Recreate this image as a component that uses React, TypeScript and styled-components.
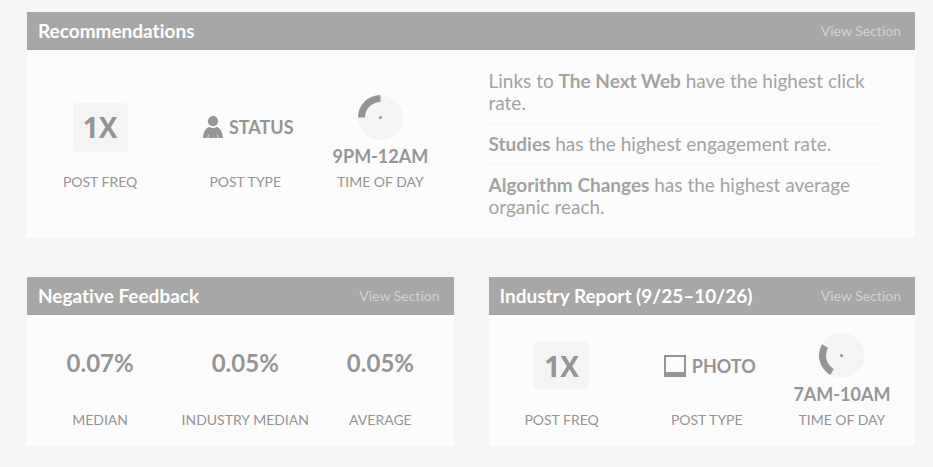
import React from "react";
import styled, { createGlobalStyle } from "styled-components";

const GlobalStyle = createGlobalStyle`
  * { box-sizing: border-box; }
  body {
    margin: 0;
    background: #f5f5f5;
    color: #959595;
    font-family: "Lato", "Liberation Sans", sans-serif;
    font-variant-ligatures: none;
  }
`;

const Page = styled.main`
  display: grid;
  grid-template-columns: 1fr 1fr;
  gap: 39px 35px;
  padding: 12px 18px 20px 27px;
`;

const Card = styled.section<{ $wide?: boolean }>`
  grid-column: ${(p) => (p.$wide ? "1 / -1" : "auto")};
  background: #fcfcfc;
`;

const CardHeader = styled.header`
  display: flex;
  align-items: center;
  justify-content: space-between;
  height: 38px;
  padding: 0 14px 0 11px;
  background: #a7a7a7;
  border-bottom: 1px solid #a2a2a2;
`;

const CardTitle = styled.h2`
  margin: 0;
  color: #fff;
  font-size: 19px;
  line-height: 24px;
  font-weight: 700;
`;

const SectionLink = styled.a`
  color: #d2d2d2;
  font-size: 14px;
  line-height: 20px;
  text-decoration: none;
`;

const SplitBody = styled.div`
  display: grid;
  grid-template-columns: 1fr 1fr;
  column-gap: 35px;
  align-items: center;
  padding-bottom: 4px;
`;

const Metrics = styled.div`
  display: grid;
  grid-template-columns: 146fr 144fr 126fr;
  padding: 12px 10px 16px 0;
`;

const Metric = styled.div`
  display: flex;
  flex-direction: column;
  align-items: center;
  gap: 5px;
`;

const MetricValue = styled.div`
  display: flex;
  align-items: center;
  justify-content: center;
  height: 77px;
`;

const MetricLabel = styled.div`
  font-size: 14px;
  line-height: 21px;
  white-space: nowrap;
`;

const Frequency = styled.div`
  display: flex;
  align-items: center;
  justify-content: center;
  width: 55px;
  height: 49px;
  border-radius: 4px;
  background: #f4f4f4;
  font-family: "Open Sans", sans-serif;
  font-size: 28px;
  font-weight: 700;
`;

const Percent = styled.div`
  padding-bottom: 6px;
  font-size: 24px;
  line-height: 28px;
  font-weight: 700;
`;

const PostType = styled.div`
  display: flex;
  align-items: center;
  gap: 6px;
  padding-left: 6px;
  font-size: 18px;
  line-height: 20px;
  font-weight: 700;
`;

const TimeOfDay = styled.div`
  display: flex;
  flex-direction: column;
  align-items: center;
  gap: 6px;
  padding-top: 6px;
  font-size: 18px;
  line-height: 20px;
  font-weight: 700;
  white-space: nowrap;
`;

const Insights = styled.ul`
  margin: 0;
  padding: 11px 35px 7px 0;
  list-style: none;
`;

const Insight = styled.li`
  padding: 9px 0;
  color: #a3a3a3;
  font-size: 19px;
  line-height: 22px;

  & + & {
    border-top: 1px solid #f3f3f3;
  }
`;

function PersonIcon() {
  return (
    <svg width="20" height="22" viewBox="0 0 20 22" fill="#959595" aria-hidden="true">
      <circle cx="10" cy="5.2" r="5.1" />
      <path d="M0 22C.3 15.4 3.4 11.6 6.2 11Q10 13 13.8 11C16.6 11.6 19.7 15.4 20 22Z" />
      <path d="M5.6 18.6L4.7 22M14.4 18.6L15.3 22" stroke="#fcfcfc" strokeWidth=".7" />
    </svg>
  );
}

function PhotoIcon() {
  return (
    <svg width="22" height="22" viewBox="0 0 22 22" aria-hidden="true">
      <path fill="#959595" fillRule="evenodd" d="M0 0H22V22H0ZM2 2V17H20V2Z" />
    </svg>
  );
}

function Clock({ from, to }: { from: number; to: number }) {
  const point = (hour: number) => {
    const a = (hour / 12) * Math.PI * 2;
    return `${22.5 + 19 * Math.sin(a)} ${22.5 - 19 * Math.cos(a)}`;
  };
  return (
    <svg width="45" height="45" viewBox="0 0 45 45" aria-hidden="true">
      <circle cx="22.5" cy="22.5" r="22.5" fill="#f4f4f4" />
      <path d={`M${point(from)}A19 19 0 0 1 ${point(to)}`} fill="none" stroke="#959595" strokeWidth="7" />
      <circle cx="22.5" cy="22.5" r="1.5" fill="#959595" />
    </svg>
  );
}

function Stat({ label, children }: { label: string; children: React.ReactNode }) {
  return (
    <Metric>
      <MetricValue>{children}</MetricValue>
      <MetricLabel>{label}</MetricLabel>
    </Metric>
  );
}

function Header({ title }: { title: string }) {
  return (
    <CardHeader>
      <CardTitle>{title}</CardTitle>
      <SectionLink href="#">View Section</SectionLink>
    </CardHeader>
  );
}

type PostingProps = {
  icon: React.ReactNode;
  type: string;
  from: number;
  to: number;
  time: string;
};

function PostingMetrics({ icon, type, from, to, time }: PostingProps) {
  return (
    <Metrics>
      <Stat label="POST FREQ">
        <Frequency>1X</Frequency>
      </Stat>
      <Stat label="POST TYPE">
        <PostType>
          {icon}
          {type}
        </PostType>
      </Stat>
      <Stat label="TIME OF DAY">
        <TimeOfDay>
          <Clock from={from} to={to} />
          {time}
        </TimeOfDay>
      </Stat>
    </Metrics>
  );
}

export default function App() {
  return (
    <>
      <GlobalStyle />
      <Page>
        <Card $wide>
          <Header title="Recommendations" />
          <SplitBody>
            <PostingMetrics icon={<PersonIcon />} type="STATUS" from={9} to={12} time="9PM-12AM" />
            <Insights>
              <Insight>
                Links to <b>The Next Web</b> have the highest click rate.
              </Insight>
              <Insight>
                <b>Studies</b> has the highest engagement rate.
              </Insight>
              <Insight>
                <b>Algorithm Changes</b> has the highest average organic reach.
              </Insight>
            </Insights>
          </SplitBody>
        </Card>
        <Card>
          <Header title="Negative Feedback" />
          <Metrics>
            <Stat label="MEDIAN">
              <Percent>0.07%</Percent>
            </Stat>
            <Stat label="INDUSTRY MEDIAN">
              <Percent>0.05%</Percent>
            </Stat>
            <Stat label="AVERAGE">
              <Percent>0.05%</Percent>
            </Stat>
          </Metrics>
        </Card>
        <Card>
          <Header title="Industry Report (9/25–10/26)" />
          <PostingMetrics icon={<PhotoIcon />} type="PHOTO" from={7} to={10} time="7AM-10AM" />
        </Card>
      </Page>
    </>
  );
}
